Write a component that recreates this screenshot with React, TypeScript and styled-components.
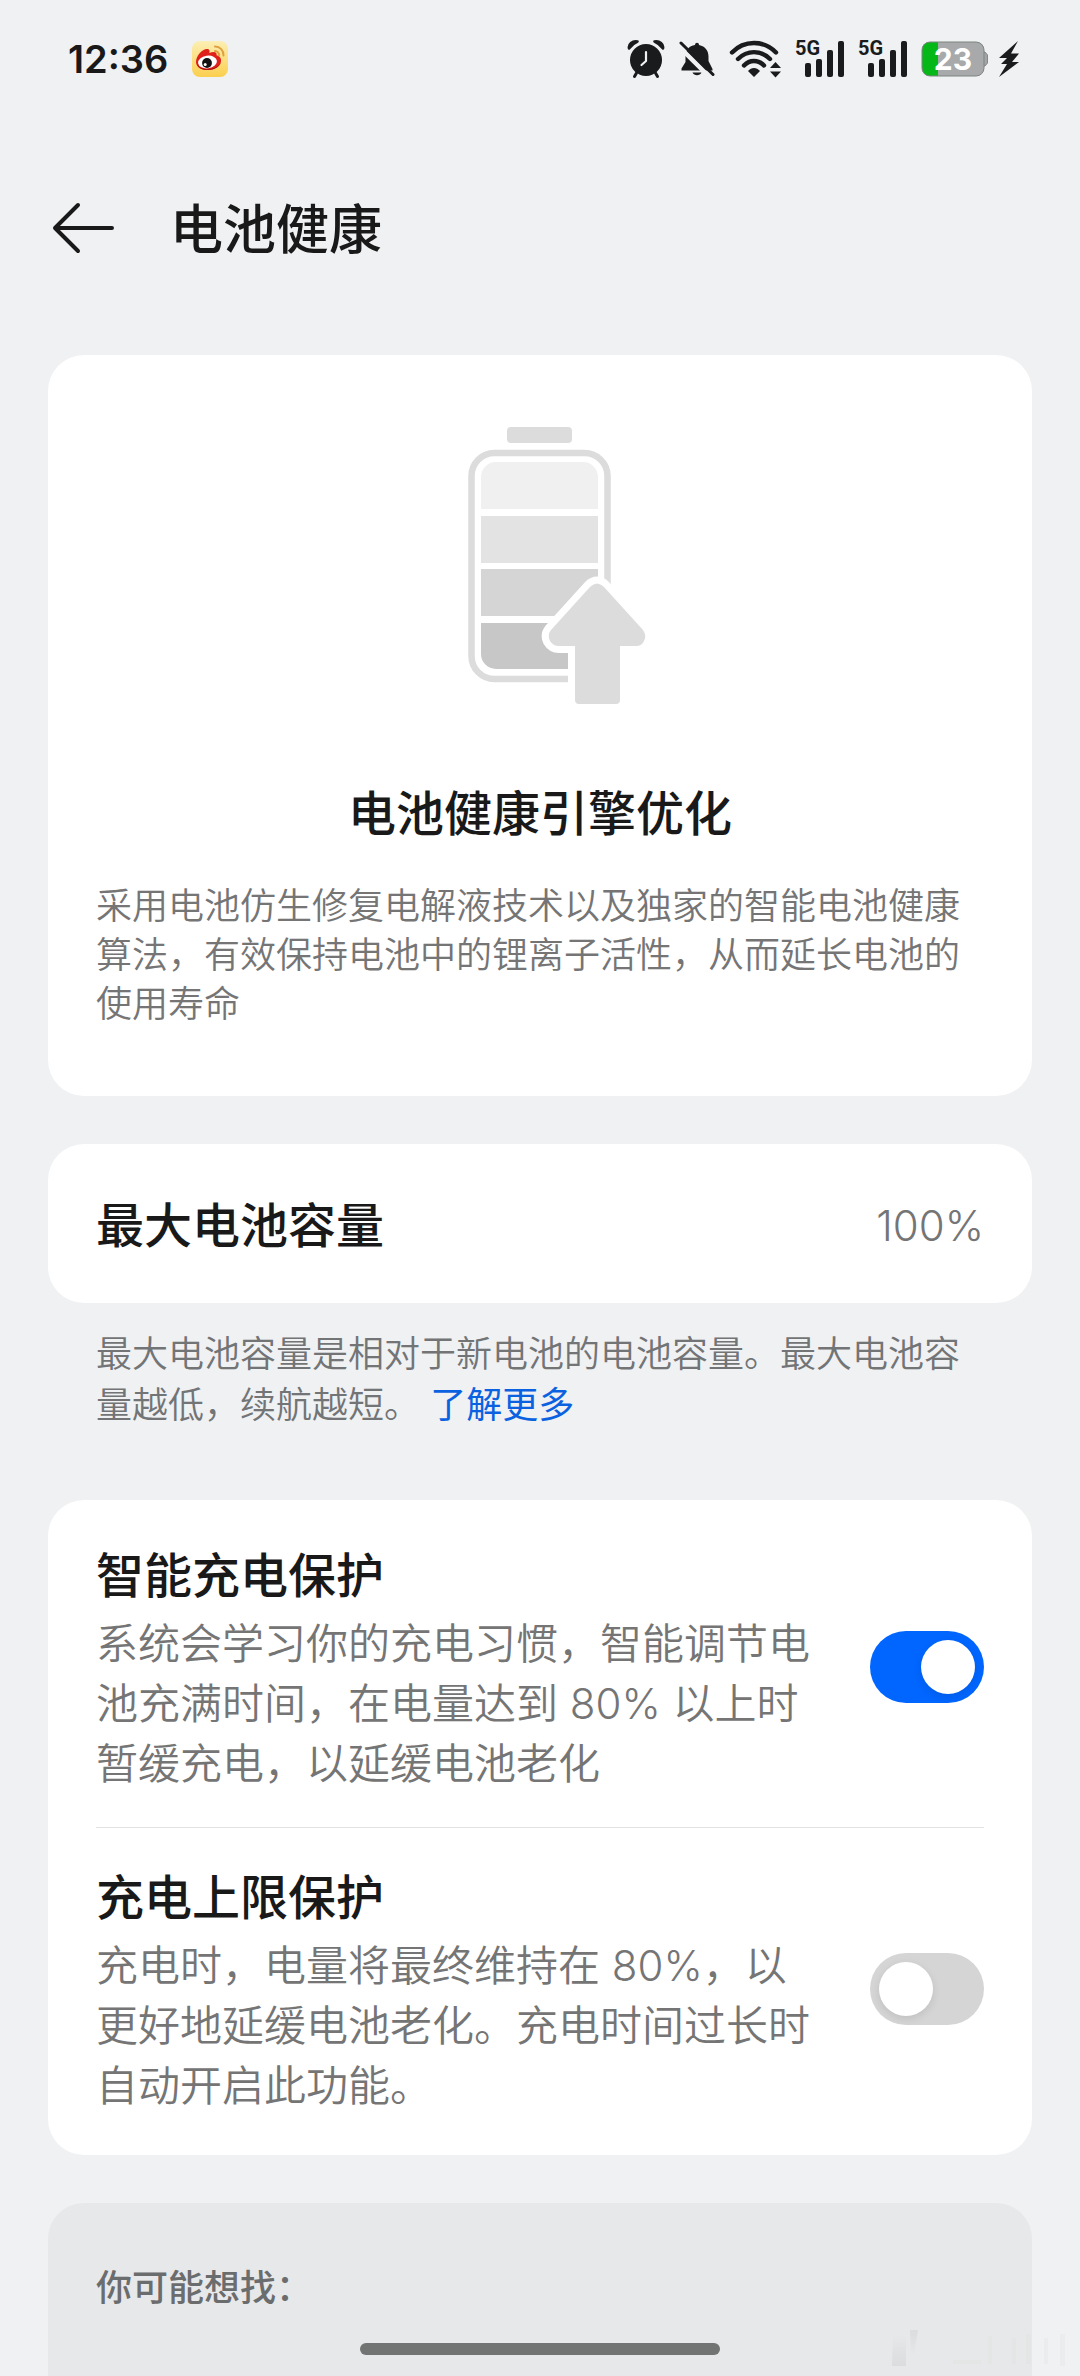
import React, { useState } from "react";
import styled, { createGlobalStyle } from "styled-components";

const GlobalStyle = createGlobalStyle`
  * { box-sizing: border-box; }
  body {
    margin: 0;
    background: #eff1f3;
    color: #191919;
    font-family: Inter, "Noto Sans CJK SC", sans-serif;
    -webkit-font-smoothing: antialiased;
  }
  h1, h2, h3, p { margin: 0; }
`;

const Page = styled.div`
  display: flex;
  flex-direction: column;
  min-height: 100vh;
  overflow: hidden;
`;

const StatusBar = styled.header`
  display: flex;
  align-items: center;
  justify-content: space-between;
  height: 118px;
  padding: 0 60px 0 68px;
`;

const StatusGroup = styled.div<{ $gap: number }>`
  display: flex;
  align-items: center;
  gap: ${(p) => p.$gap}px;

  svg { display: block; }
`;

const Clock = styled.time`
  font-size: 38px;
  font-weight: 600;
  line-height: 48px;
`;

const TitleBar = styled.div`
  display: flex;
  align-items: center;
  gap: 50px;
  height: 220px;
  padding: 0 48px;
`;

const BackButton = styled.button`
  display: flex;
  padding: 0;
  border: 0;
  background: none;
  color: inherit;
  cursor: pointer;
`;

const PageTitle = styled.h1`
  padding-top: 4px;
  font-size: 53px;
  font-weight: 500;
  line-height: 64px;
`;

const Content = styled.main`
  display: flex;
  flex: 1;
  flex-direction: column;
  gap: 48px;
  padding: 17px 48px 0;
`;

const Card = styled.section`
  border-radius: 36px;
  background: #ffffff;
`;

const HeroCard = styled(Card)`
  display: flex;
  flex-direction: column;
  align-items: center;
  padding: 70px 48px 67px;
`;

const HeroTitle = styled.h2`
  margin-top: 79px;
  font-size: 48px;
  font-weight: 500;
  line-height: 60px;
`;

const HeroText = styled.p`
  margin-top: 38px;
  color: #757575;
  font-size: 36px;
  font-weight: 350;
  line-height: 49px;
`;

const CapacityCard = styled(Card)`
  display: flex;
  align-items: center;
  justify-content: space-between;
  padding: 52px 48px 47px;
`;

const ItemTitle = styled.h3`
  font-size: 48px;
  font-weight: 500;
  line-height: 60px;
`;

const Capacity = styled.span`
  color: #757575;
  font-size: 42px;
  font-weight: 350;
  line-height: 60px;
`;

const Note = styled.p`
  padding: 26px 48px 21px;
  color: #727476;
  font-size: 36px;
  font-weight: 350;
  line-height: 51px;
`;

const Link = styled.a`
  color: #0b62e0;
  font-weight: 400;
  text-decoration: none;
`;

const Stack = styled.div`
  display: flex;
  flex-direction: column;
`;

const SettingsCard = styled(Card)`
  padding: 6px 48px;
`;

const SettingRow = styled.label`
  display: flex;
  align-items: center;
  justify-content: space-between;
  gap: 54px;
  padding: 33px 0;
  cursor: pointer;

  & + & { border-top: 1px solid #e2e2e2; }
`;

const SettingText = styled.div`
  display: flex;
  flex: 1;
  flex-direction: column;
  gap: 8px;
  padding-top: 7px;
`;

const SettingDescription = styled.p`
  color: #757575;
  font-size: 42px;
  font-weight: 350;
  line-height: 60px;
`;

const Switch = styled.input`
  display: flex;
  flex: none;
  align-items: center;
  width: 114px;
  height: 72px;
  margin: 0;
  padding: 9px;
  border-radius: 36px;
  appearance: none;
  background: #d5d5d5;
  cursor: pointer;

  &::before {
    width: 54px;
    height: 54px;
    border-radius: 50%;
    background: #ffffff;
    box-shadow: 0 3px 9px rgba(0, 0, 0, 0.1);
    content: "";
  }

  &:checked {
    justify-content: flex-end;
    background: #0066ff;
  }
`;

const SuggestionPanel = styled.section`
  flex: 1;
  padding: 60px 48px 0;
  border-radius: 36px 36px 0 0;
  background: #e6e8e9;
`;

const SuggestionTitle = styled.h2`
  color: #6b6c6d;
  font-size: 36px;
  font-weight: 500;
  line-height: 51px;
`;

const HomeIndicator = styled.div`
  position: fixed;
  bottom: 21px;
  left: 50%;
  width: 360px;
  height: 12px;
  margin-left: -180px;
  border-radius: 6px;
  background: #727473;
`;

const Watermark = styled.svg`
  position: fixed;
  right: 0;
  bottom: 0;
  opacity: 0.5;
`;

const SignalText = styled.text`
  font-family: Roboto, sans-serif;
  font-size: 20px;
  font-weight: 700;
`;

const BatteryText = styled.text`
  font-family: Inter, sans-serif;
  font-size: 30px;
  font-weight: 700;
`;

const INK = "#191b1c";

function WeiboIcon() {
  return (
    <svg width="36" height="36" viewBox="0 0 36 36" aria-label="微博">
      <defs>
        <linearGradient id="weibo" x1="0" y1="0" x2="0" y2="1">
          <stop offset="0" stopColor="#fcefb4" />
          <stop offset="1" stopColor="#fbcf4e" />
        </linearGradient>
      </defs>
      <rect width="36" height="36" rx="8" fill="url(#weibo)" />
      <path d="M4 21C4 15 10 8 15 8c2.500 0 3 2 2.300 4 4-1.800 8-1.500 7.300 2.200 3 .8 4.500 2.500 4.500 5.300 0 5-6 9.500-13 9.500S4 26 4 21Z" fill="#e0201b" />
      <path d="M5 23c1 4 5 6 11 6 6.500 0 12-3.500 13-8-2 4-6 6.500-12 7-5.500.5-10-1.500-12-5Z" fill="#a31313" />
      <ellipse cx="15.500" cy="21" rx="9.500" ry="6.300" fill="#fff" transform="rotate(-8 15.500 21)" />
      <circle cx="15" cy="22" r="4.900" fill="#111" />
      <circle cx="13.200" cy="23.500" r="1.500" fill="#fff" />
      <path d="M23 5.500a8.500 8.500 0 0 1 8.500 9M23 10a4 4 0 0 1 4 4.500" fill="none" stroke="#e0a040" strokeWidth="2" strokeLinecap="round" />
    </svg>
  );
}

function AlarmIcon() {
  return (
    <svg width="38" height="40" viewBox="0 0 38 40" aria-hidden="true">
      <circle cx="19" cy="21" r="16" fill={INK} />
      <path d="M2 9.500C1 5 5.500 1.500 10.500 2.500 7 4 4.500 6 2 9.500ZM36 9.500C37 5 32.500 1.500 27.500 2.500 31 4 33.500 6 36 9.500Z" fill={INK} stroke={INK} strokeWidth="2.500" strokeLinejoin="round" />
      <path d="M9.500 34 7.500 37.500M28.500 34l2 3.500" stroke={INK} strokeWidth="3" strokeLinecap="round" />
      <path d="M19 13v9l-4.500 4" fill="none" stroke="#eff1f3" strokeWidth="2.200" strokeLinecap="round" strokeLinejoin="round" />
    </svg>
  );
}

function MutedBellIcon() {
  return (
    <svg width="36" height="36" viewBox="0 0 36 36" aria-hidden="true">
      <path d="M16 4c0-3 4-3 4 0 6.500 1.300 9.500 6 9.500 11.500V20l4 8v1.500H2.500v-2l4-6.500v-5.500C6.500 9 10 5 16 4Z" fill={INK} />
      <path d="M13.500 31.500h9c-1.500 3.500-7.500 3.500-9 0Z" fill={INK} />
      <path d="M-1 4.500 30 35.500" stroke="#eff1f3" strokeWidth="4.500" />
      <path d="M2 2l32 31.500" stroke={INK} strokeWidth="3" strokeLinecap="round" />
    </svg>
  );
}

function WifiIcon() {
  return (
    <svg width="52" height="38" viewBox="0 0 52 38" aria-hidden="true">
      <g fill="none" stroke={INK} strokeWidth="4.400" strokeLinecap="round">
        <path d="M3 12.500C15-.2 35-.2 47 12.500" />
        <path d="M9 19c9-9.200 23-9.200 32 0" />
        <path d="M15 25.500c5.500-6 14.500-6 20 0" />
      </g>
      <path d="M19 31c3.500-4 8.500-4 12 0L25 37ZM41 28l5.500-6 5.500 6ZM41 31.500h11L46.500 37.500Z" fill={INK} />
    </svg>
  );
}

function SignalIcon() {
  return (
    <svg width="49" height="48" viewBox="0 0 49 48" aria-label="5G">
      <SignalText x="0" y="20" fill={INK}>5G</SignalText>
      <g fill={INK}>
        <rect x="10" y="28" width="6" height="14" rx="2" />
        <rect x="21" y="24" width="6" height="18" rx="2" />
        <rect x="32" y="15" width="6" height="27" rx="2" />
        <rect x="43" y="6" width="6" height="36" rx="2" />
      </g>
    </svg>
  );
}

function BatteryStatusIcon() {
  return (
    <svg width="67" height="36" viewBox="0 0 67 36" aria-label="23%">
      <defs>
        <clipPath id="battery-shell">
          <rect x="1" y="1" width="62" height="34" rx="8" />
        </clipPath>
      </defs>
      <path d="M62 11h2l2.500 3v8L64 25h-2Z" fill="#a3a4a5" stroke="#858687" />
      <g clipPath="url(#battery-shell)">
        <rect width="67" height="36" fill="#a8a9aa" />
        <rect width="17" height="36" fill="#06b817" />
      </g>
      <rect x="1" y="1" width="62" height="34" rx="8" fill="none" stroke="#7c8580" strokeWidth="1" />
      <BatteryText x="32" y="29" textAnchor="middle" fill="#ffffff">23</BatteryText>
    </svg>
  );
}

function BoltIcon() {
  return (
    <svg width="22" height="38" viewBox="0 0 22 38" aria-hidden="true">
      <path d="M20 1 1 18h8l-6 6h6L1 37 21 22h-7l7-8.500h-8Z" fill={INK} />
    </svg>
  );
}

function BackIcon() {
  return (
    <svg width="72" height="56" viewBox="0 0 72 56" aria-hidden="true">
      <path d="M30 5 7 28l23 23M7 28h57" fill="none" stroke="#191919" strokeWidth="4" strokeLinecap="round" strokeLinejoin="round" />
    </svg>
  );
}

function BatteryArt() {
  return (
    <svg width="228" height="280" viewBox="0 0 228 280" aria-hidden="true">
      <defs>
        <clipPath id="battery-cells">
          <rect x="55" y="37" width="117" height="207" rx="15" />
        </clipPath>
      </defs>
      <rect x="81" y="2" width="65" height="16" rx="4" fill="#dcdcdc" />
      <rect x="45.500" y="28" width="136" height="226" rx="23" fill="none" stroke="#dcdcdc" strokeWidth="6.500" />
      <g clipPath="url(#battery-cells)">
        <rect x="55" y="37" width="117" height="47" fill="#f0f0f0" />
        <rect x="55" y="91" width="117" height="47" fill="#e3e3e3" />
        <rect x="55" y="144" width="117" height="47" fill="#d5d5d5" />
        <rect x="55" y="198" width="117" height="46" fill="#c7c7c7" />
      </g>
      <path
        d="M164 162q7-7 14 0l39 43q4 6 1 11-2 5-8 5h-16v54q0 4-4 4h-37q-4 0-4-4v-54h-16q-6 0-9-5-3-6 1-11Z"
        fill="#dcdcdc"
        stroke="#ffffff"
        strokeWidth="14"
        paintOrder="stroke"
      />
    </svg>
  );
}

function CornerMark() {
  return (
    <Watermark width="200" height="56" viewBox="0 0 200 56" aria-hidden="true">
      <defs>
        <linearGradient id="mark-rise" x1="0" y1="0" x2="0" y2="1">
          <stop offset="0" stopColor="#cfd1d2" stopOpacity="0" />
          <stop offset="1" stopColor="#cfd1d2" />
        </linearGradient>
        <linearGradient id="mark-fall" x1="0" y1="0" x2="0" y2="1">
          <stop offset="0" stopColor="#cfd1d2" />
          <stop offset="1" stopColor="#cfd1d2" stopOpacity="0" />
        </linearGradient>
      </defs>
      <path d="M13 16h13v30H12Z" fill="url(#mark-rise)" />
      <path d="M30 10h8l-4 24h-3Z" fill="url(#mark-fall)" />
      <g fill="#dfe1e2" opacity="0.500">
        <rect x="73" y="40" width="28" height="4" />
        <rect x="108" y="16" width="4" height="28" />
        <rect x="132" y="18" width="4" height="26" />
        <rect x="146" y="14" width="5" height="30" />
        <rect x="164" y="18" width="4" height="26" />
        <rect x="180" y="14" width="5" height="32" />
      </g>
    </Watermark>
  );
}

interface Setting {
  title: string;
  description: string;
  enabled: boolean;
}

const SETTINGS: Setting[] = [
  {
    title: "智能充电保护",
    description: "系统会学习你的充电习惯，智能调节电池充满时间，在电量达到 80% 以上时暂缓充电，以延缓电池老化",
    enabled: true,
  },
  {
    title: "充电上限保护",
    description: "充电时，电量将最终维持在 80%，以更好地延缓电池老化。充电时间过长时自动开启此功能。",
    enabled: false,
  },
];

function SettingItem({ title, description, enabled }: Setting) {
  const [on, setOn] = useState(enabled);
  return (
    <SettingRow>
      <SettingText>
        <ItemTitle>{title}</ItemTitle>
        <SettingDescription>{description}</SettingDescription>
      </SettingText>
      <Switch type="checkbox" role="switch" checked={on} onChange={() => setOn(!on)} />
    </SettingRow>
  );
}

export default function App() {
  return (
    <Page lang="zh-CN">
      <GlobalStyle />
      <StatusBar>
        <StatusGroup $gap={24}>
          <Clock>12:36</Clock>
          <WeiboIcon />
        </StatusGroup>
        <StatusGroup $gap={14}>
          <AlarmIcon />
          <MutedBellIcon />
          <WifiIcon />
          <SignalIcon />
          <SignalIcon />
          <StatusGroup $gap={10}>
            <BatteryStatusIcon />
            <BoltIcon />
          </StatusGroup>
        </StatusGroup>
      </StatusBar>
      <TitleBar>
        <BackButton type="button" aria-label="返回">
          <BackIcon />
        </BackButton>
        <PageTitle>电池健康</PageTitle>
      </TitleBar>
      <Content>
        <HeroCard>
          <BatteryArt />
          <HeroTitle>电池健康引擎优化</HeroTitle>
          <HeroText>
            采用电池仿生修复电解液技术以及独家的智能电池健康算法，有效保持电池中的锂离子活性，从而延长电池的使用寿命
          </HeroText>
        </HeroCard>
        <Stack>
          <CapacityCard>
            <ItemTitle>最大电池容量</ItemTitle>
            <Capacity>100%</Capacity>
          </CapacityCard>
          <Note>
            最大电池容量是相对于新电池的电池容量。最大电池容量越低，续航越短。 <Link href="#more">了解更多</Link>
          </Note>
        </Stack>
        <SettingsCard>
          {SETTINGS.map((s) => (
            <SettingItem key={s.title} {...s} />
          ))}
        </SettingsCard>
        <SuggestionPanel>
          <SuggestionTitle>你可能想找：</SuggestionTitle>
        </SuggestionPanel>
      </Content>
      <CornerMark />
      <HomeIndicator />
    </Page>
  );
}
